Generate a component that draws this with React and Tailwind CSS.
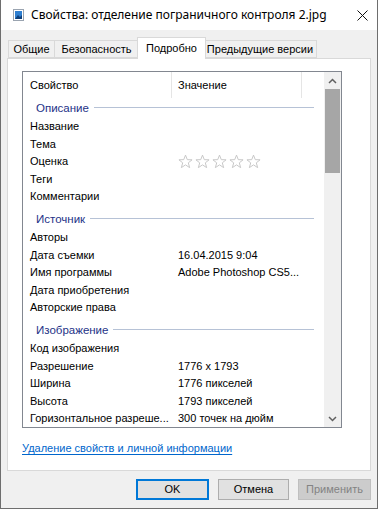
import React from 'react';

const TITLE_FONT = { fontFamily: '"Noto Sans", "Open Sans", sans-serif' };
const FONT = { fontFamily: '"Liberation Sans", Arial, sans-serif' };

const groups = [
  {
    title: 'Описание',
    first: true,
    rows: [
      ['Название', ''],
      ['Тема', ''],
      ['Оценка', 'stars'],
      ['Теги', ''],
      ['Комментарии', ''],
    ],
  },
  {
    title: 'Источник',
    rows: [
      ['Авторы', ''],
      ['Дата съемки', '16.04.2015 9:04'],
      ['Имя программы', 'Adobe Photoshop CS5...'],
      ['Дата приобретения', ''],
      ['Авторские права', ''],
    ],
  },
  {
    title: 'Изображение',
    rows: [
      ['Код изображения', ''],
      ['Разрешение', '1776 x 1793'],
      ['Ширина', '1776 пикселей'],
      ['Высота', '1793 пикселей'],
      ['Горизонтальное разреше...', '300 точек на дюйм'],
    ],
  },
];

const Star = () => (
  <svg width="15" height="15" viewBox="0 0 16 16" className="shrink-0">
    <path
      d="M8 1.2 L9.9 6 L15 6.2 L11 9.4 L12.4 14.5 L8 11.6 L3.6 14.5 L5 9.4 L1 6.2 L6.1 6 Z"
      fill="white"
      stroke="#c4c4c4"
      strokeWidth="1"
      strokeLinejoin="round"
    />
  </svg>
);

const Stars = () => (
  <div className="flex items-center gap-[2px]">
    {[0, 1, 2, 3, 4].map((i) => (
      <Star key={i} />
    ))}
  </div>
);

const FileIcon = () => (
  <svg width="11" height="12" viewBox="0 0 11 12">
    <rect x="0.5" y="0.5" width="10" height="11" fill="#ffffff" stroke="#9aa4b0" />
    <rect x="2" y="2" width="7" height="8" fill="#2f7fd0" />
    <path d="M2 10 L5 6 L7 8 L9 6 L9 10 Z" fill="#0e3f7a" />
  </svg>
);

const Tab = ({ label, active, w }) => (
  <div
    className={`${
      active
        ? 'h-[22px] bg-white border-l border-b-0 -mx-[2px] relative z-10 -mb-px'
        : 'h-[18px] bg-[#f0f0f0]'
    } ${w} border-y border-r border-[#d9d9d9] first:border-l flex items-center justify-center text-[11px] text-black leading-none whitespace-nowrap`}
  >
    {label}
  </div>
);

const Group = ({ title, first, rows }) => (
  <>
    <div className={`flex items-center pl-[13px] pr-[10px] ${first ? 'h-[20px]' : 'h-[24px] pt-[4px]'}`}>
      <span className="text-[11.5px] text-[#1e3287] leading-[16px]">{title}</span>
      <div className="flex-1 ml-[5px] h-px bg-[#b6c2d6]" />
    </div>
    {rows.map(([name, value]) => (
      <div key={name} className="flex items-center h-[18px] text-[11px] leading-[16px] text-black">
        <div className="w-[149px] pl-[7px] pr-[4px] whitespace-nowrap overflow-hidden">{name}</div>
        <div className="pl-[6px] whitespace-nowrap">{value === 'stars' ? <Stars /> : value}</div>
      </div>
    ))}
  </>
);

export default function App() {
  return (
    <div
      className="w-[378px] h-[509px] flex flex-col bg-[#f0f0f0] border-x border-b border-[#6e6e6e] overflow-hidden"
      style={FONT}
    >
      {/* Title bar */}
      <div className="h-[30px] bg-white flex items-center shrink-0">
        <div className="ml-[12px] mr-[7px] flex items-center">
          <FileIcon />
        </div>
        <span className="text-[12px] text-black whitespace-nowrap" style={TITLE_FONT}>
          Свойства: отделение пограничного контроля 2.jpg
        </span>
        <div className="ml-auto mr-[9px] w-[12px] h-[12px] flex items-center justify-center">
          <svg width="11" height="11" viewBox="0 0 11 11">
            <path d="M0.5 0.5 L10.5 10.5 M10.5 0.5 L0.5 10.5" stroke="#111" strokeWidth="1" />
          </svg>
        </div>
      </div>

      {/* Tabs */}
      <div className="flex items-end pl-[7px] mt-[7px] h-[21px] shrink-0">
        <Tab label="Общие" w="w-[47px]" />
        <Tab label="Безопасность" w="w-[84px]" />
        <Tab label="Подробно" w="w-[69px]" active />
        <Tab label="Предыдущие версии" w="w-[113px]" />
      </div>

      {/* Panel */}
      <div className="mx-[6px] bg-white border border-[#d9d9d9] h-[413px] flex flex-col pt-[12px] pl-[14px] pr-[28px] shrink-0">
        <div className="h-[357px] border border-[#828790] flex overflow-hidden">
          <div className="flex-1 flex flex-col overflow-hidden">
            {/* Header */}
            <div className="h-[26px] flex text-[11px] leading-[16px] text-black shrink-0">
              <div className="w-[149px] pl-[7px] pt-[5px] border-r border-[#e5e5e5]">Свойство</div>
              <div className="w-[130px] pl-[6px] pt-[5px] border-r border-[#e5e5e5]">Значение</div>
            </div>
            {groups.map((g) => (
              <Group key={g.title} {...g} />
            ))}
          </div>
          {/* Scrollbar */}
          <div className="w-[17px] bg-[#f0f0f0] flex flex-col shrink-0">
            <div className="h-[17px] flex items-center justify-center">
              <svg width="9" height="6" viewBox="0 0 9 6">
                <path d="M1 5 L4.5 1.5 L8 5" fill="none" stroke="#606060" strokeWidth="1.5" />
              </svg>
            </div>
            <div className="mx-px h-[84px] bg-[#a6a6a6]" />
            <div className="flex-1" />
            <div className="h-[17px] flex items-center justify-center">
              <svg width="9" height="6" viewBox="0 0 9 6">
                <path d="M1 1 L4.5 4.5 L8 1" fill="none" stroke="#606060" strokeWidth="1.5" />
              </svg>
            </div>
          </div>
        </div>
        <div className="mt-[11px] leading-[16px]">
          <span className="text-[11px] text-[#0066cc] underline underline-offset-2 whitespace-nowrap">
            Удаление свойств и личной информации
          </span>
        </div>
      </div>

      {/* Buttons */}
      <div className="flex justify-end gap-[9px] pr-[6px] mt-[8px]">
        <button className="w-[73px] h-[21px] border-2 border-[#0078d7] bg-[#e1e1e1] text-[11px] text-black leading-none">
          OK
        </button>
        <button className="w-[71px] h-[21px] border border-[#adadad] bg-[#e1e1e1] text-[11px] text-black leading-none">
          Отмена
        </button>
        <button className="w-[73px] h-[21px] border border-[#bfbfbf] bg-[#cccccc] text-[11px] text-[#838383] leading-none">
          Применить
        </button>
      </div>
    </div>
  );
}
